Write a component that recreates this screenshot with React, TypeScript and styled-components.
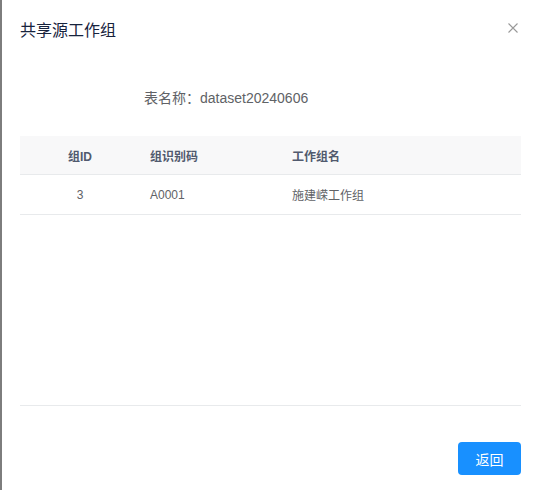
import React from 'react';
import styled, { createGlobalStyle } from 'styled-components';

const GlobalStyle = createGlobalStyle`
  html, body {
    margin: 0;
    padding: 0;
    height: 100%;
    overflow: hidden;
  }
  body {
    font-family: 'Liberation Sans', 'Noto Sans CJK SC', sans-serif;
    background: #808080;
  }
`;

const Page = styled.div`
  display: flex;
  height: 490px;
`;

const Backdrop = styled.div`
  flex: 0 0 2px;
  background: #7d7d7d;
`;

const Modal = styled.div`
  flex: 1;
  display: flex;
  flex-direction: column;
  background: #fff;
  padding: 0 18px;
`;

const Header = styled.div`
  position: relative;
  height: 60px;
  display: flex;
  align-items: center;
`;

const Title = styled.div`
  font-size: 16px;
  color: #17233d;
  line-height: 1;
  padding-top: 1px;
`;

const Close = styled.button`
  position: absolute;
  right: 2px;
  top: 22px;
  width: 12px;
  height: 12px;
  padding: 0;
  border: 0;
  background: none;
  cursor: pointer;
  display: flex;
`;

const TableName = styled.div`
  height: 76px;
  display: flex;
  align-items: center;
  padding-left: 124px;
  padding-bottom: 2px;
  box-sizing: border-box;
  font-size: 14px;
  color: #606266;
`;

const Table = styled.div`
  display: flex;
  flex-direction: column;
`;

const Row = styled.div<{ $head?: boolean }>`
  display: grid;
  grid-template-columns: 120px 142px 1fr;
  height: ${(p) => (p.$head ? 38 : 39)}px;
  align-items: center;
  border-bottom: 1px solid #e8eaec;
  background: ${(p) => (p.$head ? '#f8f8f9' : '#fff')};
  font-size: 12px;
  color: ${(p) => (p.$head ? '#515a6e' : '#606266')};
  font-weight: ${(p) => (p.$head ? 700 : 400)};
`;

const Cell = styled.div<{ $center?: boolean }>`
  padding-left: ${(p) => (p.$center ? 0 : 10)}px;
  text-align: ${(p) => (p.$center ? 'center' : 'left')};
`;

const Spacer = styled.div`
  height: 190px;
  border-bottom: 1px solid #e8eaec;
`;

const Footer = styled.div`
  display: flex;
  justify-content: flex-end;
  padding-top: 36px;
`;

const Button = styled.button`
  width: 63px;
  height: 33px;
  border: 0;
  border-radius: 4px;
  background: #1890ff;
  color: #fff;
  font-family: inherit;
  font-size: 14px;
  cursor: pointer;
`;

const columns = ['组ID', '组识别码', '工作组名'];
const rows = [{ id: '3', code: 'A0001', name: '施建嵘工作组' }];

export default function App() {
  return (
    <>
      <GlobalStyle />
      <Page>
        <Backdrop />
        <Modal>
          <Header>
            <Title>共享源工作组</Title>
            <Close aria-label="close">
              <svg width="12" height="12" viewBox="0 0 12 12">
                <path d="M1.5 1.5 L10.5 10.5 M10.5 1.5 L1.5 10.5" stroke="#999" strokeWidth="1.1" />
              </svg>
            </Close>
          </Header>
          <TableName>表名称：dataset20240606</TableName>
          <Table>
            <Row $head>
              {columns.map((c, i) => (
                <Cell key={c} $center={i === 0}>
                  {c}
                </Cell>
              ))}
            </Row>
            {rows.map((r) => (
              <Row key={r.id}>
                <Cell $center>{r.id}</Cell>
                <Cell>{r.code}</Cell>
                <Cell>{r.name}</Cell>
              </Row>
            ))}
          </Table>
          <Spacer />
          <Footer>
            <Button>返回</Button>
          </Footer>
        </Modal>
      </Page>
    </>
  );
}
